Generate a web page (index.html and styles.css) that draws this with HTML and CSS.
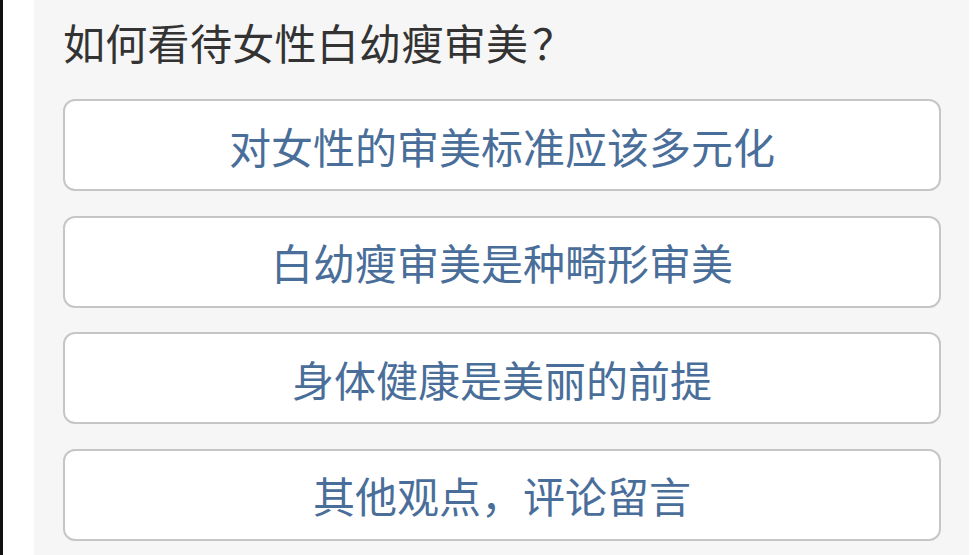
FILE: index.html
```html
<!DOCTYPE html>
<html lang="zh-CN">
<head>
    <meta charset="UTF-8" />
    <meta name="viewport" content="width=device-width, initial-scale=1" />
    <title>投票 - 如何看待女性白幼瘦审美</title>
    <link rel="stylesheet" href="styles.css">
</head>
<body>

    <div class="page">
        <div class="rail"></div>
        <div class="gutter"></div>

        <section class="vote">
            <h1>如何看待女性白幼瘦审美<span class="qmark">？</span></h1>
            <div class="vote-options">
                <a href="#" class="vote-option">对女性的审美标准应该多元化</a>
                <a href="#" class="vote-option">白幼瘦审美是种畸形审美</a>
                <a href="#" class="vote-option">身体健康是美丽的前提</a>
                <a href="#" class="vote-option">其他观点，评论留言</a>
            </div>
        </section>
    </div>

</body>
</html>
```

FILE: styles.css
```css
* {
    box-sizing: border-box;
    margin: 0;
    padding: 0;
}

body {
    font-family: "Noto Sans CJK SC", "Noto Sans", sans-serif;
    background-color: #fff;
    color: #333;
    overflow: hidden;
}

.page {
    display: flex;
    height: 555px;
}

.rail {
    width: 3px;
    background-color: #111;
}

.gutter {
    width: 31px;
    background-color: #fff;
}

.vote {
    width: 935px;
    padding: 21px 28px 0 29px;
    background-color: #f6f6f6;
}

    .vote h1 {
        font-size: 42px;
        font-weight: normal;
        line-height: 42px;
        letter-spacing: 0.3px;
        color: #333;
        margin-bottom: 36px;
    }

    /* 问号前留一点空隙 */
    .vote h1 .qmark {
        margin-left: 4px;
    }

.vote-options {
    display: flex;
    flex-direction: column;
    gap: 24.5px;
}

.vote-option {
    display: flex;
    justify-content: center;
    align-items: center;
    height: 92px;
    background-color: #fff;
    border: 2px solid #c6c6c6;
    border-radius: 12px;
    font-size: 42px;
    color: #4a6e9a;
    text-decoration: none;
}
```
